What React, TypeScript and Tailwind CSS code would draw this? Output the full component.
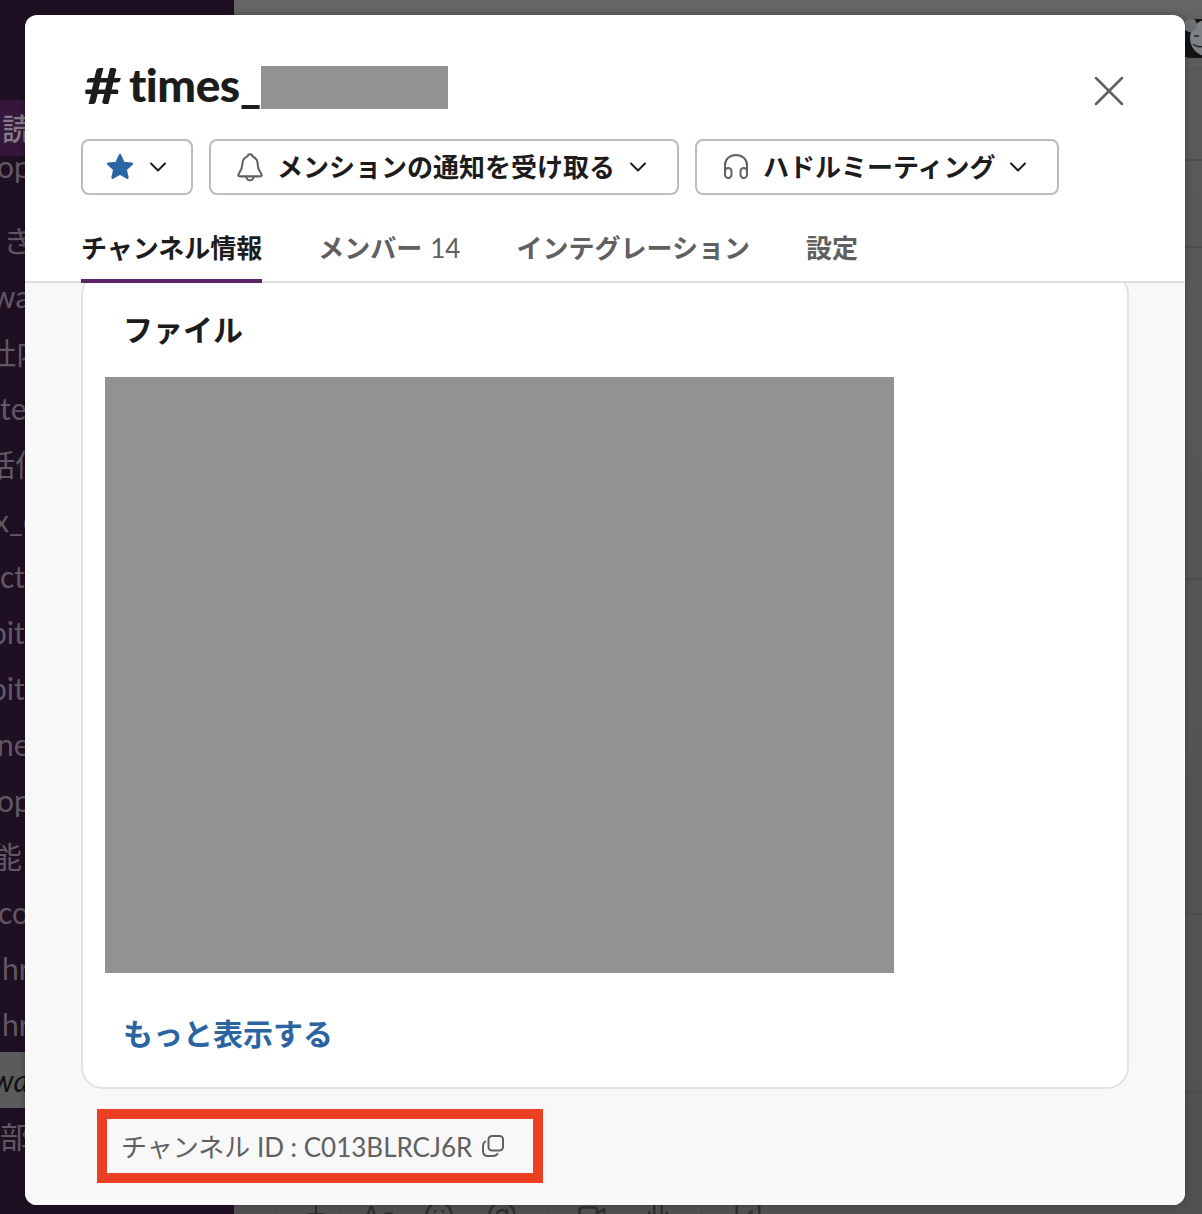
import { Plus, Smile, AtSign, Video, Mic, SquareSlash } from "lucide-react";

const font = { fontFamily: '"Lato","Noto Sans CJK JP",sans-serif' };

const rows = [
  { t: "き", c: "ml-[3px]" },
  { t: "wa", c: "ml-[-8px]" },
  { t: "社内", c: "ml-[-14px]" },
  { t: "te", c: "ml-[0px]" },
  { t: "話何", c: "ml-[-15px]" },
  { t: "x_c", c: "ml-[-6px]" },
  { t: "ct_", c: "ml-[0px]" },
  { t: "bit_", c: "ml-[-10px]" },
  { t: "bit_", c: "ml-[-10px]" },
  { t: "ne", c: "ml-[-3px]" },
  { t: "op", c: "ml-[-3px]" },
  { t: "能", c: "ml-[-8px]" },
  { t: "co", c: "ml-[-2px]" },
  { t: "hr", c: "ml-[2px]" },
  { t: "hr", c: "ml-[2px]" },
];

function Chevron() {
  return (
    <svg width="18" height="18" viewBox="0 0 18 18" fill="none" className="shrink-0">
      <path d="M2 5.500 9 12.500 16 5.500" stroke="#1d1c1d" strokeWidth="2" strokeLinecap="round" strokeLinejoin="round" />
    </svg>
  );
}

function Btn({ w, pad, children }: { w: string; pad: string; children: React.ReactNode }) {
  return (
    <div className={`flex h-[56px] items-center rounded-[8px] border-2 border-[#bcbcbc] bg-white ${w} ${pad}`}>
      {children}
    </div>
  );
}

export default function App() {
  return (
    <div className="relative flex h-[1214px] w-[1202px] overflow-hidden bg-[#1f0f23]" style={font}>
      <aside className="flex w-[234px] shrink-0 flex-col overflow-hidden bg-[#1f0f23] pt-[100px] text-[30px] text-[#625864]">
        <div className="flex h-[56px] shrink-0 items-center bg-[#34173b] pl-[2px] font-medium text-[#857c88]">読</div>
        <div className="h-[56px] shrink-0">
          <div className="ml-[-3px] flex h-[20px] items-center">op</div>
        </div>
        {rows.map((r, i) => (
          <div key={i} className="flex h-[56px] shrink-0 items-center whitespace-nowrap">
            <span className={r.c}>{r.t}</span>
          </div>
        ))}
        <div className="flex h-[56px] shrink-0 items-center bg-[#5b5a5c] italic text-[#121013]">
          <span className="ml-[-8px]">wa</span>
        </div>
        <div className="flex h-[56px] shrink-0 items-center">
          <span className="ml-[0px]">部</span>
        </div>
      </aside>

      <main className="flex min-w-0 flex-1 flex-col bg-linear-to-b from-[#676767] via-[#5a5a5a] via-[3%] to-[#505050]">
        <div className="flex h-[65px] shrink-0 justify-end overflow-hidden border-b border-[#616161] pt-[19px]">
          <svg width="40" height="39" viewBox="0 0 40 39" className="mr-[-21px] shrink-0 rounded-[6px]">
            <rect width="40" height="39" fill="#141414" />
            <ellipse cx="24" cy="19" rx="17" ry="18" fill="#7b8185" />
            <circle cx="7" cy="6" r="7" fill="#6d7175" />
            <path d="M11 17h5M10 25q6 5 12 1" stroke="#242424" strokeWidth="1.500" fill="none" />
          </svg>
        </div>
        <div className="h-[96px] shrink-0 border-b-2 border-[#4d4d4d]" />
        <div className="h-[87px] shrink-0 border-b-2 border-[#4d4d4d]" />
        <div className="h-[332px] shrink-0 border-b-2 border-[#4d4d4d]" />
        <div className="h-[335px] shrink-0 border-b-2 border-[#4d4d4d]" />
        <div className="h-[178px] shrink-0 border-b-2 border-[#4d4d4d]" />
        <div className="h-[108px] shrink-0" />
        <div className="flex h-[40px] shrink-0 items-start pl-[41px] text-[#2f2f2f]">
          <div className="h-[40px] w-px shrink-0 bg-[#484848]" />
          <Plus size={26} strokeWidth={2} className="ml-[27px] shrink-0" />
          <div className="ml-[10px] h-[40px] w-px shrink-0 bg-[#484848]" />
          <span className="ml-[21px] w-[32px] shrink-0 text-[30px] leading-none">Aa</span>
          <Smile size={30} strokeWidth={2} className="ml-[31px] mt-[-1px] shrink-0" />
          <AtSign size={30} strokeWidth={2} className="ml-[33px] mt-[-1px] shrink-0" />
          <div className="ml-[31px] h-[40px] w-px shrink-0 bg-[#484848]" />
          <Video size={30} strokeWidth={2} className="ml-[28px] mt-[-1px] shrink-0" />
          <Mic size={30} strokeWidth={2} className="ml-[36px] mt-[-1px] shrink-0" />
          <div className="ml-[28px] h-[40px] w-px shrink-0 bg-[#484848]" />
          <SquareSlash size={30} strokeWidth={2} className="ml-[31px] mt-[-1px] shrink-0" />
        </div>
      </main>

      <section className="absolute left-[25px] top-[15px] flex h-[1190px] w-[1160px] flex-col overflow-hidden rounded-[12px] bg-white shadow-[0_0_6px_rgba(0,0,0,0.25)]">
        <header className="h-[268px] shrink-0 border-b-2 border-[#dedede] px-[56px]">
          <div className="relative flex h-[124px] items-start pt-[46px]">
            <h1 className="flex h-[54px] items-center font-black leading-none text-[#1d1c1d]">
              <span className="ml-[3px] mt-[-6px] w-[45px] shrink-0 origin-left scale-x-[1.3] text-[50px] font-bold">#</span>
              <span className="mt-[-6px] text-[46px] tracking-[-0.5px]">times_</span>
              <span className="mb-[1px] ml-[0px] inline-block h-[43px] w-[187px] bg-[#929292]" />
            </h1>
            <svg width="30" height="30" viewBox="0 0 30 30" className="absolute right-[5px] top-[61px]" fill="none">
              <path d="M2 2 28 28M28 2 2 28" stroke="#616061" strokeWidth="2.500" strokeLinecap="round" />
            </svg>
          </div>
          <div className="flex gap-[16px] text-[26px] font-bold text-[#1d1c1d]">
            <Btn w="w-[112px]" pad="pl-[21px]">
              <svg width="32" height="32" viewBox="0 0 24 24" className="shrink-0">
                <path
                  d="M12 3.200 14.600 9l6.200.6-4.700 4.200 1.400 6.200L12 16.800 6.500 20l1.400-6.200L3.200 9.600 9.400 9z"
                  fill="#2b65a3"
                  stroke="#2b65a3"
                  strokeWidth="2"
                  strokeLinejoin="round"
                />
              </svg>
              <span className="ml-[13px]"><Chevron /></span>
            </Btn>
            <Btn w="w-[470px]" pad="pl-[24px]">
              <svg width="30" height="32" viewBox="0 0 28 30" fill="none" className="shrink-0">
                <path
                  d="M14 3c-1.400 0-2.200 1-2.200 2C8.500 6.200 6.800 9 6.800 12.400c0 5-2 7-3.400 9-.8 1.100-.3 2.400 1.200 2.400h18.800c1.500 0 2-1.300 1.200-2.400-1.400-2-3.400-4-3.400-9 0-3.400-1.700-6.200-5-7.400C16.200 4 15.400 3 14 3Z"
                  stroke="#616061"
                  strokeWidth="1.900"
                  strokeLinejoin="round"
                />
                <path d="M10.500 24c.4 2.300 1.800 3.500 3.500 3.500s3.100-1.200 3.500-3.500" stroke="#616061" strokeWidth="1.900" />
              </svg>
              <span className="ml-[12px] whitespace-nowrap">メンションの通知を受け取る</span>
              <span className="ml-[14px]"><Chevron /></span>
            </Btn>
            <Btn w="w-[364px]" pad="pl-[26px]">
              <svg width="26" height="28" viewBox="0 0 26 28" fill="none" className="shrink-0">
                <path d="M2 18v-6C2 6 7 2 13 2s11 4 11 10v6" stroke="#616061" strokeWidth="2" />
                <rect x="2" y="15" width="6.500" height="10" rx="3.200" stroke="#616061" strokeWidth="2" />
                <rect x="17.500" y="15" width="6.500" height="10" rx="3.200" stroke="#616061" strokeWidth="2" />
              </svg>
              <span className="ml-[14px] whitespace-nowrap">ハドルミーティング</span>
              <span className="ml-[14px]"><Chevron /></span>
            </Btn>
          </div>
          <nav className="mt-[24px] flex h-[64px] gap-[56px] text-[26px] font-bold text-[#616061]">
            <div className="flex h-[64px] items-center border-b-4 border-[#5c2468] pb-[2px] text-[#1d1c1d]">チャンネル情報</div>
            <div className="flex h-[64px] items-center whitespace-nowrap pb-[6px]">
              メンバー<span className="ml-[8px] font-normal">14</span>
            </div>
            <div className="flex h-[64px] items-center pb-[6px]">インテグレーション</div>
            <div className="flex h-[64px] items-center pb-[6px]">設定</div>
          </nav>
        </header>

        <div className="min-h-0 flex-1 overflow-hidden bg-[#f8f8f8] px-[56px]">
          <div className="mt-[-10px] h-[816px] rounded-[22px] border-2 border-[#e2e2e2] bg-white">
            <h2 className="ml-[40px] mt-[32px] text-[30px] font-bold leading-[44px] text-[#1d1c1d]">ファイル</h2>
            <div className="ml-[22px] mt-[26px] h-[596px] w-[789px] bg-[#929292]" />
            <div className="ml-[40px] mt-[38px] text-[30px] font-bold leading-[44px] text-[#2a65a2]">もっと表示する</div>
          </div>
          <div className="ml-[16px] mt-[20px] flex h-[74px] w-[446px] items-center border-[10px] border-[#ec4024] pl-[14px] pt-[2px] text-[26px] text-[#616061]">
            <span className="whitespace-nowrap">チャンネル ID : C013BLRCJ6R</span>
            <svg width="24" height="24" viewBox="0 0 24 24" fill="none" className="mb-[2px] ml-[9px] shrink-0">
              <rect x="7.500" y="2" width="14.500" height="14.500" rx="3.500" stroke="#616061" strokeWidth="2" />
              <path d="M4.200 7.500C2.800 8.500 2 9.800 2 12v5c0 3 2 5 5 5h5c2.200 0 3.500-.8 4.500-2.200" stroke="#616061" strokeWidth="2" strokeLinecap="round" />
            </svg>
          </div>
        </div>
      </section>
    </div>
  );
}
